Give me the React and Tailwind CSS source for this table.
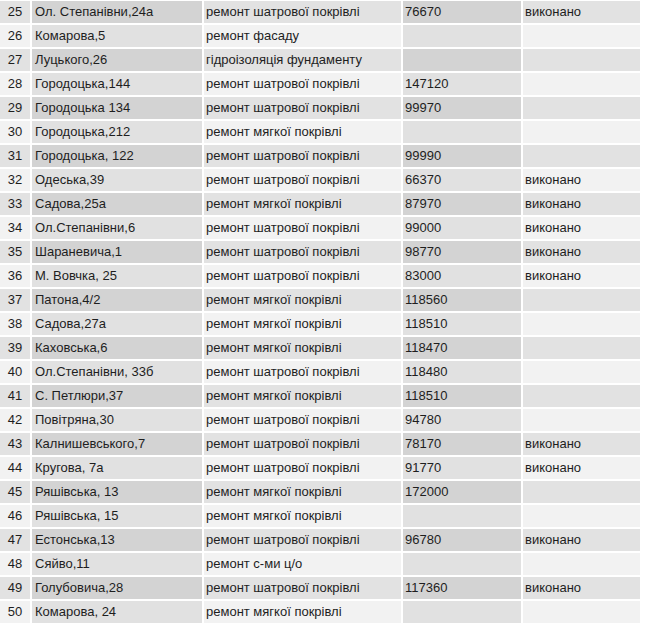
import React from "react";

const rows = [
  [25, "Ол. Степанівни,24а", "ремонт шатрової покрівлі", "76670", "виконано"],
  [26, "Комарова,5", "ремонт фасаду", "", ""],
  [27, "Луцького,26", "гідроізоляція фундаменту", "", ""],
  [28, "Городоцька,144", "ремонт шатрової покрівлі", "147120", ""],
  [29, "Городоцька 134", "ремонт шатрової покрівлі", "99970", ""],
  [30, "Городоцька,212", "ремонт мягкої покрівлі", "", ""],
  [31, "Городоцька, 122", "ремонт шатрової покрівлі", "99990", ""],
  [32, "Одеська,39", "ремонт шатрової покрівлі", "66370", "виконано"],
  [33, "Садова,25а", "ремонт мягкої покрівлі", "87970", "виконано"],
  [34, "Ол.Степанівни,6", "ремонт шатрової покрівлі", "99000", "виконано"],
  [35, "Шараневича,1", "ремонт шатрової покрівлі", "98770", "виконано"],
  [36, "М. Вовчка, 25", "ремонт шатрової покрівлі", "83000", "виконано"],
  [37, "Патона,4/2", "ремонт мягкої покрівлі", "118560", ""],
  [38, "Садова,27а", "ремонт мягкої покрівлі", "118510", ""],
  [39, "Каховська,6", "ремонт мягкої покрівлі", "118470", ""],
  [40, "Ол.Степанівни, 33б", "ремонт шатрової покрівлі", "118480", ""],
  [41, "С. Петлюри,37", "ремонт мягкої покрівлі", "118510", ""],
  [42, "Повітряна,30", "ремонт шатрової покрівлі", "94780", ""],
  [43, "Калнишевського,7", "ремонт шатрової покрівлі", "78170", "виконано"],
  [44, "Кругова, 7а", "ремонт шатрової покрівлі", "91770", "виконано"],
  [45, "Ряшівська, 13", "ремонт мягкої покрівлі", "172000", ""],
  [46, "Ряшівська, 15", "ремонт мягкої покрівлі", "", ""],
  [47, "Естонська,13", "ремонт шатрової покрівлі", "96780", "виконано"],
  [48, "Сяйво,11", "ремонт с-ми ц/о", "", ""],
  [49, "Голубовича,28", "ремонт шатрової покрівлі", "117360", "виконано"],
  [50, "Комарова, 24", "ремонт мягкої покрівлі", "", ""],
];

export default function App() {
  return (
    <div className="w-[645px] h-[625px] overflow-hidden bg-white pt-px font-['Liberation_Sans',Arial,sans-serif] text-[13px] leading-[22px] text-[#1e1e1e]">
      <div className="flex flex-col gap-[2px]">
        {rows.map(([n, addr, work, sum, status]) => {
          const odd = n % 2 === 1;
          // odd rows are the darker stripe
          const light = odd ? "bg-[#e2e2e2]" : "bg-[#f2f2f2]";
          const dark = odd ? "bg-[#d3d3d3]" : "bg-[#e1e1e1]";
          return (
            <div key={n} className="flex h-[22px] gap-[2px] whitespace-nowrap">
              <div className={`w-[30px] text-center ${light}`}>{n}</div>
              <div className={`w-[170px] pl-[3px] ${dark}`}>{addr}</div>
              <div className={`w-[197px] pl-[2px] ${light}`}>{work}</div>
              <div className={`w-[118px] pl-[2px] ${dark}`}>{sum}</div>
              <div className={`w-[117px] pl-[2px] ${light}`}>{status}</div>
            </div>
          );
        })}
      </div>
    </div>
  );
}
